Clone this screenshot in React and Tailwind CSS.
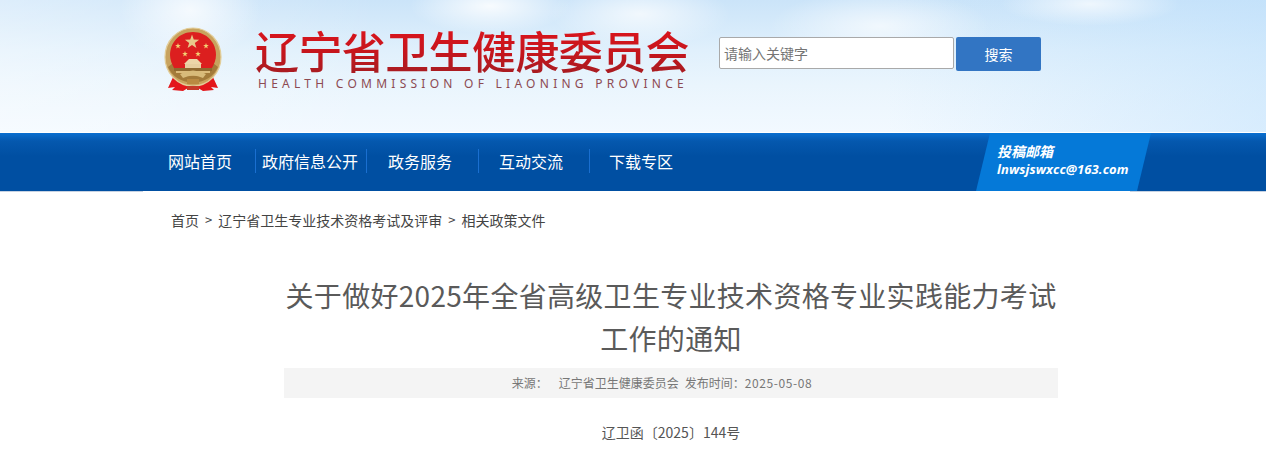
import React from "react";

const cjk = "font-['Noto_Sans_CJK_SC','Noto_Sans',sans-serif]";

function Star({ x, y, r, fill = "#f3cf72" }) {
  const pts = [];
  for (let i = 0; i < 10; i++) {
    const rad = i % 2 === 0 ? r : r * 0.4;
    const a = -Math.PI / 2 + (i * Math.PI) / 5;
    pts.push(`${x + rad * Math.cos(a)},${y + rad * Math.sin(a)}`);
  }
  return <polygon points={pts.join(" ")} fill={fill} />;
}

function Emblem() {
  return (
    <svg width="60" height="68" viewBox="0 0 60 68" className="shrink-0 blur-[0.5px]">
      {/* ribbons */}
      <path d="M11 48 L5 61 L12 60 L9 63 L20 64 L25 61 L35 61 L40 64 L51 63 L48 60 L55 61 L49 48 Z" fill="#e3161b" />
      {/* wheat ring */}
      <ellipse cx="30" cy="30" rx="28" ry="29" fill="#c8a35e" />
      <ellipse cx="30" cy="30" rx="28" ry="29" fill="none" stroke="#e2cd98" strokeWidth="1.2" />
      <path d="M5 40 Q11 54 30 56 Q49 54 55 40 L50 36 Q45 49 30 49 Q15 49 10 36 Z" fill="#a37b3a" />
      {/* red disc */}
      <path d="M30 5 C44 5 53 16 53 28 C53 33 51 37 49 41 L11 41 C9 37 7 33 7 28 C7 16 16 5 30 5 Z" fill="#dc1f1f" />
      <Star x={29} y={15} r={7.5} fill="#e8c98a" />
      <Star x={15} y={19} r={3} />
      <Star x={43} y={19} r={3} />
      <Star x={22} y={27} r={3} />
      <Star x={35} y={27} r={3} />
      {/* gate */}
      <path d="M21 37 L26 32 L34 32 L39 37 Z" fill="#ecd6a8" />
      <rect x="22" y="37" width="16" height="4" fill="#e6cfa0" />
      <rect x="11" y="41" width="38" height="3" fill="#8f6a30" />
      <rect x="13" y="44" width="34" height="2" fill="#dcbc7c" />
      <path d="M17 47 Q30 40 43 47 L40 51 Q30 46 20 51 Z" fill="#d8bb7a" />
      <rect x="24" y="52" width="12" height="5" fill="#b98a42" />
      <rect x="24" y="59" width="12" height="4" fill="#c63a2a" />
    </svg>
  );
}

function TopHeader() {
  return (
    <header className="h-[132px] flex items-start bg-[radial-gradient(ellipse_70px_50px_at_190px_10px,rgba(255,255,255,0.75),transparent),radial-gradient(ellipse_80px_28px_at_490px_6px,rgba(255,255,255,0.85),transparent),radial-gradient(ellipse_90px_34px_at_640px_14px,rgba(255,255,255,0.7),transparent),radial-gradient(ellipse_110px_36px_at_880px_26px,rgba(255,255,255,0.65),transparent),radial-gradient(ellipse_90px_22px_at_1090px_4px,rgba(255,255,255,0.7),transparent),linear-gradient(90deg,rgba(255,255,255,0.35),transparent_30%,transparent_70%,rgba(190,224,252,0.5)),linear-gradient(180deg,#cbe4f9_0%,#e0f0fc_38%,#eaf5fd_65%,#f2f9ff_100%)]">
      <div className="ml-[163px] mt-[27px]">
        <Emblem />
      </div>
      <div className="ml-[32px] mt-[27px] w-[440px]">
        <h1 className={`${cjk} text-[44px] leading-[46px] tracking-[-0.6px] font-medium bg-[linear-gradient(180deg,#dc141c_0%,#c3161d_60%,#a81c22_100%)] bg-clip-text text-transparent whitespace-nowrap`}>
          辽宁省卫生健康委员会
        </h1>
        <p className="font-['Noto_Sans',sans-serif] mt-[3px] pl-[3px] text-[12px] leading-[16px] tracking-[4.26px] text-[#8d4a52] whitespace-nowrap">
          HEALTH COMMISSION OF LIAONING PROVINCE
        </p>
      </div>
      <div className="ml-[24px] mt-[37px] flex gap-[2px]">
        <input
          placeholder="请输入关键字"
          className={`${cjk} w-[235px] h-[32px] border border-[#a9a9a9] bg-white rounded-[2px] px-[4px] text-[14px] outline-none placeholder:text-[#757575]`}
        />
        <button className={`${cjk} w-[85px] h-[34px] rounded-[2px] bg-[#3275c3] text-white text-[14px]`}>搜索</button>
      </div>
    </header>
  );
}

const navItems = [
  { label: "网站首页", w: "w-[111px]", pad: "pl-[24px]" },
  { label: "政府信息公开", w: "w-[111px]", pad: "pl-[6px]" },
  { label: "政务服务", w: "w-[112px]", pad: "pl-[21px]" },
  { label: "互动交流", w: "w-[111px]", pad: "pl-[20px]" },
  { label: "下载专区", w: "w-[111px]", pad: "pl-[19px]" },
];

function Nav() {
  return (
    <nav className="mt-px h-[59px] flex items-stretch bg-[linear-gradient(180deg,#0a6fd0_0%,#0558ae_14%,#004fa2_40%,#004fa2_100%)] border-b border-[#c6d2e2]">
      <ul className="ml-[144px] flex items-center pb-[2px]">
        {navItems.map((item, i) => (
          <li
            key={item.label}
            className={`${cjk} ${item.w} ${item.pad} h-[24px] flex items-center text-white text-[16px] whitespace-nowrap ${i > 0 ? "border-l border-[#1a6fd0]" : ""}`}
          >
            {item.label}
          </li>
        ))}
      </ul>
      <div className="ml-[276px] w-[175px] h-[58px] pl-[21px] pb-[4px] flex flex-col justify-center bg-[#0579d8] [clip-path:polygon(14px_0,100%_0,161px_100%,0_100%)]">
        <p className={`${cjk} italic font-bold text-white text-[14px] leading-[19px]`}>投稿邮箱</p>
        <p className="font-['Open_Sans',sans-serif] italic font-bold text-white text-[13px] tracking-[0.1px] leading-[17px] whitespace-nowrap">lnwsjswxcc@163.com</p>
      </div>
    </nav>
  );
}

export default function App() {
  return (
    <div className="h-[449px] w-full overflow-hidden bg-white">
      <TopHeader />
      <Nav />
      <main className={`${cjk} -mt-px relative ml-[143px] w-[987px] bg-white`}>
        <div className="pt-[19px] pl-[28px] flex text-[14px] leading-[20px] text-[#444] whitespace-nowrap">
          <span>首页</span>
          <span className="mx-[6px] text-[13px]">&gt;</span>
          <span>辽宁省卫生专业技术资格考试及评审</span>
          <span className="mx-[6px] text-[13px]">&gt;</span>
          <span>相关政策文件</span>
        </div>
        <article className="ml-[141px] w-[774px] mt-[44px]">
          <h2 className="text-[28px] leading-[43px] tracking-[0.3px] font-normal text-[#5a5a5a] text-center">
            关于做好2025年全省高级卫生专业技术资格专业实践能力考试工作的通知
          </h2>
          <div className="mt-[8px] h-[30px] pr-[18px] bg-[#f4f4f4] flex items-center justify-center text-[12px] text-[#777]">
            <span>来源：</span>
            <span className="ml-[11px]">辽宁省卫生健康委员会</span>
            <span className="ml-[6px]">发布时间：</span>
            <span className="tracking-[0.6px]">2025-05-08</span>
          </div>
          <p className="mt-[24px] text-center text-[14px] leading-[20px] text-[#555]">辽卫函〔2025〕144号</p>
        </article>
      </main>
    </div>
  );
}
